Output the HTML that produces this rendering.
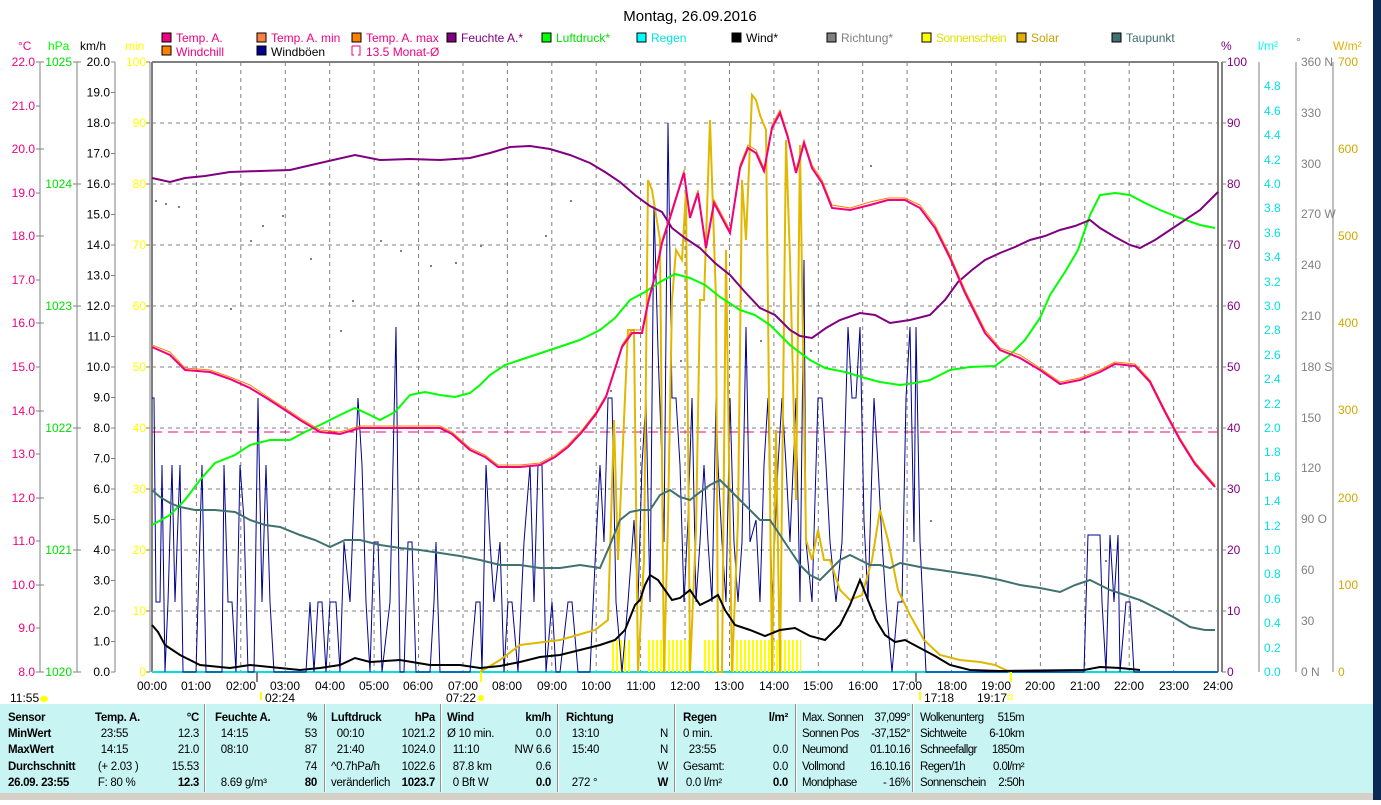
<!DOCTYPE html>
<html><head><meta charset="utf-8"><style>
body{margin:0;width:1381px;height:800px;overflow:hidden;background:#fff;font-family:"Liberation Sans",sans-serif;}
svg text{font-family:"Liberation Sans",sans-serif;font-size:12px;}
.t{position:absolute;top:710px;font-size:11.5px;letter-spacing:-0.3px;line-height:16.2px;white-space:nowrap;font-family:"Liberation Sans",sans-serif;}
.t div{display:flex;justify-content:space-between;height:16.2px}
.b{font-weight:bold}
.sep{position:absolute;top:704px;height:88px;width:1px;background:#909090;border-right:1px solid #fff}
</style></head><body>
<svg width="1381" height="800" xmlns="http://www.w3.org/2000/svg">
<defs>
<pattern id="sun" width="4" height="10" patternUnits="userSpaceOnUse"><rect x="0" width="2" height="10" fill="#ffff00"/></pattern>
</defs>
<rect x="1373" y="0" width="8" height="800" fill="#0a2a55"/>
<text x="690" y="21" text-anchor="middle" style="font-size:15px">Montag, 26.09.2016</text>
<g>
<rect x="162" y="33" width="9" height="9" fill="#f0007f" stroke="#000"/><text x="176" y="42" fill="#f0007f">Temp. A.</text>
<rect x="257" y="33" width="9" height="9" fill="#ff8040" stroke="#000"/><text x="271" y="42" fill="#f0007f">Temp. A. min</text>
<rect x="352" y="33" width="9" height="9" fill="#ff8000" stroke="#000"/><text x="366" y="42" fill="#f0007f">Temp. A. max</text>
<rect x="447" y="33" width="9" height="9" fill="#800080" stroke="#000"/><text x="461" y="42" fill="#800080">Feuchte A.*</text>
<rect x="542" y="33" width="9" height="9" fill="#00ff00" stroke="#000"/><text x="556" y="42" fill="#00e000">Luftdruck*</text>
<rect x="637" y="33" width="9" height="9" fill="#00ffff" stroke="#000"/><text x="651" y="42" fill="#00e0e0">Regen</text>
<rect x="732" y="33" width="9" height="9" fill="#000" stroke="#000"/><text x="746" y="42">Wind*</text>
<rect x="827" y="33" width="9" height="9" fill="#808080" stroke="#000"/><text x="841" y="42" fill="#808080">Richtung*</text>
<rect x="922" y="33" width="9" height="9" fill="#ffff00" stroke="#000"/><text x="936" y="42" fill="#e0e000" style="letter-spacing:-0.5px">Sonnenschein</text>
<rect x="1017" y="33" width="9" height="9" fill="#e0b000" stroke="#000"/><text x="1031" y="42" fill="#c8a000">Solar</text>
<rect x="1112" y="33" width="9" height="9" fill="#407070" stroke="#000"/><text x="1126" y="42" fill="#407070">Taupunkt</text>
<rect x="162" y="46" width="9" height="9" fill="#ff8000" stroke="#000"/><text x="176" y="56" fill="#f0007f">Windchill</text>
<rect x="257" y="46" width="9" height="9" fill="#000090" stroke="#000"/><text x="271" y="56">Windböen</text>
<path d="M352 46h8v9h-2M352 46v9h2" fill="none" stroke="#f0007f"/><text x="366" y="56" fill="#f0007f">13.5 Monat-Ø</text>
</g>
<text x="18" y="50" fill="#f0007f">°C</text><text x="48" y="50" fill="#00ff00">hPa</text><text x="80" y="50">km/h</text><text x="125" y="50" fill="#ffff00">min</text>
<text x="1221" y="50" fill="#800080">%</text><text x="1258" y="50" fill="#00ffff">l/m²</text><text x="1296" y="46" fill="#808080">°</text><text x="1333" y="50" fill="#e0b000">W/m²</text>
<g stroke="#808080" stroke-dasharray="4,4" stroke-width="1">
<path d="M152 123H1218M152 184H1218M152 245H1218M152 306H1218M152 367H1218M152 428H1218M152 489H1218M152 550H1218M152 611H1218"/>
<path d="M196.4 62V672M240.8 62V672M285.3 62V672M329.7 62V672M374.1 62V672M418.5 62V672M463 62V672M507.4 62V672M551.8 62V672M596.2 62V672M640.6 62V672M685 62V672M729.5 62V672M773.9 62V672M818.3 62V672M862.7 62V672M907.1 62V672M951.5 62V672M996 62V672M1040.4 62V672M1084.8 62V672M1129.2 62V672M1173.6 62V672"/>
</g>
<path d="M152 62H1218M152 62V672M1218 62V672M1222 62V672" stroke="#808080" stroke-width="2" fill="none"/>
<line x1="152" y1="672" x2="1218" y2="672" stroke="#00e0e0" stroke-width="2"/>
<g stroke="#808080" fill="none"><path d="M40 62V672M77 62V672M115 62V672M150 62V672"/>
<path d="M36 62h8M36 106h4M36 149h8M36 193h4M36 236h8M36 280h4M36 323h8M36 367h4M36 411h8M36 454h4M36 498h8M36 541h4M36 585h8M36 628h4M36 672h8"/>
<path d="M73 62h8M73 184h8M73 306h8M73 428h8M73 550h8M73 672h8"/>
<path d="M111 62h4M111 92.5h4M111 123h4M111 153.5h4M111 184h4M111 214.5h4M111 245h4M111 275.5h4M111 306h4M111 336.5h4M111 367h4M111 397.5h4M111 428h4M111 458.5h4M111 489h4M111 519.5h4M111 550h4M111 580.5h4M111 611h4M111 641.5h4M111 672h4"/>
<path d="M146 62h4M146 123h4M146 184h4M146 245h4M146 306h4M146 367h4M146 428h4M146 489h4M146 550h4M146 611h4M146 672h4"/>
<path d="M1222 62h4M1222 123h4M1222 184h4M1222 245h4M1222 306h4M1222 367h4M1222 428h4M1222 489h4M1222 550h4M1222 611h4M1222 672h4"/>
<path d="M1259 62V672M1296 62V672M1333 62V672"/>
</g>
<g fill="#f0007f" text-anchor="end"><text x="35" y="66">22.0</text><text x="35" y="110">21.0</text><text x="35" y="153">20.0</text><text x="35" y="197">19.0</text><text x="35" y="240">18.0</text><text x="35" y="284">17.0</text><text x="35" y="327">16.0</text><text x="35" y="371">15.0</text><text x="35" y="415">14.0</text><text x="35" y="458">13.0</text><text x="35" y="502">12.0</text><text x="35" y="545">11.0</text><text x="35" y="589">10.0</text><text x="35" y="632">9.0</text><text x="35" y="676">8.0</text></g>
<g fill="#00e000" text-anchor="end"><text x="72" y="66">1025</text><text x="72" y="188">1024</text><text x="72" y="310">1023</text><text x="72" y="432">1022</text><text x="72" y="554">1021</text><text x="72" y="676">1020</text></g>
<g text-anchor="end"><text x="110" y="66">20.0</text><text x="110" y="96.5">19.0</text><text x="110" y="127">18.0</text><text x="110" y="157.5">17.0</text><text x="110" y="188">16.0</text><text x="110" y="218.5">15.0</text><text x="110" y="249">14.0</text><text x="110" y="279.5">13.0</text><text x="110" y="310">12.0</text><text x="110" y="340.5">11.0</text><text x="110" y="371">10.0</text><text x="110" y="401.5">9.0</text><text x="110" y="432">8.0</text><text x="110" y="462.5">7.0</text><text x="110" y="493">6.0</text><text x="110" y="523.5">5.0</text><text x="110" y="554">4.0</text><text x="110" y="584.5">3.0</text><text x="110" y="615">2.0</text><text x="110" y="645.5">1.0</text><text x="110" y="676">0.0</text></g>
<g fill="#ffff00" text-anchor="end"><text x="146" y="66">100</text><text x="146" y="127">90</text><text x="146" y="188">80</text><text x="146" y="249">70</text><text x="146" y="310">60</text><text x="146" y="371">50</text><text x="146" y="432">40</text><text x="146" y="493">30</text><text x="146" y="554">20</text><text x="146" y="615">10</text><text x="146" y="676">0</text></g>
<g fill="#800080"><text x="1227" y="66">100</text><text x="1227" y="127">90</text><text x="1227" y="188">80</text><text x="1227" y="249">70</text><text x="1227" y="310">60</text><text x="1227" y="371">50</text><text x="1227" y="432">40</text><text x="1227" y="493">30</text><text x="1227" y="554">20</text><text x="1227" y="615">10</text><text x="1227" y="676">0</text></g>
<g fill="#00e0e0"><text x="1264" y="90">4.8</text><text x="1264" y="115">4.6</text><text x="1264" y="139">4.4</text><text x="1264" y="164">4.2</text><text x="1264" y="188">4.0</text><text x="1264" y="212">3.8</text><text x="1264" y="237">3.6</text><text x="1264" y="261">3.4</text><text x="1264" y="286">3.2</text><text x="1264" y="310">3.0</text><text x="1264" y="334">2.8</text><text x="1264" y="359">2.6</text><text x="1264" y="383">2.4</text><text x="1264" y="408">2.2</text><text x="1264" y="432">2.0</text><text x="1264" y="456">1.8</text><text x="1264" y="481">1.6</text><text x="1264" y="505">1.4</text><text x="1264" y="530">1.2</text><text x="1264" y="554">1.0</text><text x="1264" y="578">0.8</text><text x="1264" y="603">0.6</text><text x="1264" y="627">0.4</text><text x="1264" y="652">0.2</text><text x="1264" y="676">0.0</text></g>
<g fill="#808080"><text x="1301" y="66">360 N</text><text x="1301" y="117">330</text><text x="1301" y="168">300</text><text x="1301" y="218">270 W</text><text x="1301" y="269">240</text><text x="1301" y="320">210</text><text x="1301" y="371">180 S</text><text x="1301" y="422">150</text><text x="1301" y="472">120</text><text x="1301" y="523">90 O</text><text x="1301" y="574">60</text><text x="1301" y="625">30</text><text x="1301" y="676">0 N</text></g>
<g fill="#d0a800"><text x="1338" y="66">700</text><text x="1338" y="153">600</text><text x="1338" y="240">500</text><text x="1338" y="327">400</text><text x="1338" y="414">300</text><text x="1338" y="502">200</text><text x="1338" y="589">100</text><text x="1338" y="676">0</text></g>
<rect x="612" y="640" width="18" height="32" fill="url(#sun)"/>
<rect x="648" y="640" width="44" height="32" fill="url(#sun)"/>
<rect x="702" y="640" width="18" height="32" fill="url(#sun)"/>
<rect x="733" y="640" width="68" height="32" fill="url(#sun)"/>
<line x1="152" y1="432" x2="1218" y2="432" stroke="#f0007f" stroke-dasharray="10,6"/>
<g fill="#808080"><rect x="155" y="200" width="2" height="2"/><rect x="165" y="203" width="2" height="2"/><rect x="178" y="206" width="2" height="2"/><rect x="230" y="308" width="2" height="2"/><rect x="250" y="240" width="2" height="2"/><rect x="262" y="225" width="2" height="2"/><rect x="282" y="215" width="2" height="2"/><rect x="310" y="258" width="2" height="2"/><rect x="340" y="330" width="2" height="2"/><rect x="352" y="300" width="2" height="2"/><rect x="380" y="240" width="2" height="2"/><rect x="400" y="250" width="2" height="2"/><rect x="430" y="265" width="2" height="2"/><rect x="455" y="262" width="2" height="2"/><rect x="480" y="245" width="2" height="2"/><rect x="545" y="235" width="2" height="2"/><rect x="570" y="200" width="2" height="2"/><rect x="610" y="390" width="2" height="2"/><rect x="680" y="360" width="2" height="2"/><rect x="740" y="300" width="2" height="2"/><rect x="760" y="340" width="2" height="2"/><rect x="810" y="350" width="2" height="2"/><rect x="870" y="165" width="2" height="2"/><rect x="930" y="520" width="2" height="2"/><rect x="1105" y="560" width="2" height="2"/><rect x="1140" y="600" width="2" height="2"/></g>
<polyline fill="none" stroke="#000090" stroke-width="1" points="152,398 154,398 156,602 160,602 162,465 165,672 168,602 172,465 175,602 180,465 183,672 196,672 198,602 202,465 206,672 222,672 224,465 228,602 232,602 236,672 240,465 244,520 248,672 254,672 258,398 262,602 266,465 270,602 274,672 278,672 300,672 306,672 310,602 314,672 318,602 322,602 326,672 330,602 336,602 340,672 344,542 350,602 358,398 362,465 366,602 370,672 374,542 378,542 382,672 390,602 396,327 400,672 404,672 408,542 412,542 416,672 430,672 434,602 436,542 440,672 470,672 476,602 480,602 482,672 486,465 490,542 494,602 500,542 504,672 508,602 512,602 518,672 524,542 530,465 534,602 538,465 542,465 546,672 552,602 556,672 560,672 568,602 572,602 578,672 590,672 596,542 600,465 604,542 608,398 612,398 616,602 622,672 628,602 634,520 638,602 642,465 646,398 650,602 654,205 658,350 662,465 664,542 668,123 672,398 676,398 680,465 684,602 688,520 692,398 696,602 700,542 704,465 708,542 712,602 716,398 718,465 722,542 726,602 730,398 734,542 738,602 742,542 746,327 750,542 756,520 760,602 764,465 768,398 772,602 778,465 782,398 786,465 790,542 796,398 800,602 804,260 806,542 812,602 818,398 822,398 826,465 830,542 836,602 842,542 848,327 852,398 856,398 860,327 864,520 868,602 874,398 878,465 882,542 886,602 892,672 898,602 902,602 906,398 910,327 914,542 916,327 920,542 926,672 1084,672 1088,535 1100,535 1102,602 1106,672 1110,535 1114,602 1118,535 1120,672 1126,602 1130,602 1134,672 1218,672"/>
<polyline fill="none" stroke="#e0b800" stroke-width="2" points="480,672 500,660 520,645 560,640 595,630 608,620 614,420 618,560 624,420 628,330 634,330 638,672 644,560 648,180 652,190 660,240 664,672 668,520 672,300 676,250 682,260 686,190 690,672 696,530 700,300 704,300 710,120 716,300 718,672 722,672 726,250 732,672 738,520 742,180 746,240 752,95 756,100 760,115 766,130 772,672 776,430 780,672 786,140 790,260 796,500 800,145 806,540 812,560 818,530 824,560 830,560 840,590 850,600 862,595 872,560 880,510 888,540 898,590 910,615 924,640 940,655 960,660 980,662 995,665 1010,672"/>
<polyline fill="none" stroke="#00ff00" stroke-width="2" points="152,525 170,515 185,500 200,480 215,463 235,455 250,445 270,440 290,440 305,432 320,425 340,415 355,408 370,415 380,420 395,412 410,395 425,392 440,395 455,397 470,393 480,385 490,375 505,365 520,360 535,355 550,350 565,345 580,340 600,330 615,318 630,300 645,292 660,282 675,274 690,278 705,285 720,297 740,310 755,315 770,325 790,345 810,360 825,368 845,372 865,378 880,382 900,385 915,383 930,380 950,370 970,367 995,366 1010,355 1025,340 1040,318 1050,295 1065,272 1078,250 1090,215 1100,195 1115,193 1130,195 1145,203 1160,210 1180,218 1200,225 1215,228"/>
<polyline fill="none" stroke="#800080" stroke-width="2" points="152,178 170,182 185,178 205,176 230,172 260,171 290,170 320,163 355,155 380,160 410,159 440,160 470,158 490,153 510,147 530,146 550,149 570,155 590,163 605,172 620,182 635,195 650,206 662,212 672,228 685,238 700,248 715,263 730,275 745,292 760,308 775,315 790,330 800,336 812,338 826,328 840,320 860,313 875,315 890,323 910,320 930,315 945,300 958,282 972,270 985,260 1000,253 1015,247 1030,240 1045,236 1060,230 1075,226 1090,220 1100,228 1115,237 1130,245 1140,248 1155,240 1170,230 1185,220 1200,210 1210,200 1218,192"/>
<polyline fill="none" stroke="#ff8000" stroke-width="1" points="152,345 170,352 185,368 210,370 230,377 250,385 268,397 285,408 300,418 320,430 340,432 360,426 380,426 440,426 452,432 470,448 485,455 498,465 520,465 540,463 555,455 568,445 582,430 596,412 606,395 614,370 622,345 632,330 642,330 648,300 656,270 662,240 670,215 678,190 684,170 690,215 698,190 706,245 714,200 722,215 730,230 740,165 748,145 756,150 764,168 772,125 780,110 788,135 796,170 804,140 812,165 822,180 832,205 850,208 870,202 888,198 905,198 920,205 935,225 950,255 965,290 985,330 1000,348 1020,355 1040,368 1060,382 1080,378 1100,370 1115,362 1135,364 1150,380 1165,410 1180,438 1195,462 1215,485"/>
<polyline fill="none" stroke="#f0007f" stroke-width="2" points="152,347 170,355 185,370 210,372 230,379 250,388 268,399 285,410 300,420 320,432 340,434 360,428 380,428 440,428 452,434 470,450 485,457 498,467 520,467 540,465 555,457 568,447 582,432 596,414 606,397 614,372 622,347 632,333 642,333 648,303 656,272 662,243 670,218 678,192 684,173 690,218 698,193 706,248 714,203 722,218 730,233 740,168 748,148 756,153 764,171 772,128 780,113 788,138 796,173 804,143 812,168 822,183 832,208 850,210 870,205 888,200 905,200 920,208 935,228 950,258 965,293 985,333 1000,350 1020,358 1040,370 1060,384 1080,380 1100,372 1115,364 1135,366 1150,382 1165,412 1180,440 1195,464 1215,487"/>
<polyline fill="none" stroke="#407070" stroke-width="2" points="152,490 160,497 170,503 180,507 195,510 215,510 235,512 250,520 265,525 280,527 300,535 315,540 330,547 345,540 360,540 380,545 400,548 420,550 440,553 460,556 480,560 500,565 520,565 540,568 560,568 580,565 600,568 610,545 620,520 630,512 640,510 650,510 660,495 670,490 680,497 690,500 700,492 710,485 720,480 730,490 740,500 750,510 760,520 770,520 780,535 790,550 800,565 810,575 820,580 830,570 840,560 850,555 860,560 870,565 880,565 890,568 900,563 910,565 925,568 940,570 960,573 980,576 1000,580 1020,585 1040,588 1060,592 1075,585 1090,580 1100,585 1110,590 1125,595 1140,600 1160,610 1175,618 1190,627 1205,630 1215,630"/>
<polyline fill="none" stroke="#000" stroke-width="2" points="152,625 158,632 165,645 180,655 200,665 230,668 250,665 270,667 300,670 320,668 340,665 355,658 370,662 400,660 430,665 460,665 480,668 500,666 520,662 540,657 560,655 580,650 600,645 615,640 625,630 635,605 640,600 645,585 650,575 658,580 665,590 672,600 680,598 690,590 700,605 710,600 718,595 725,610 735,625 750,630 765,636 780,630 795,628 810,636 825,640 840,625 850,605 860,580 868,600 876,620 885,635 895,642 905,640 920,648 935,656 950,665 970,670 1000,671 1084,670 1100,667 1120,668 1140,670"/>
<g text-anchor="middle"><text x="152" y="690">00:00</text><text x="196" y="690">01:00</text><text x="241" y="690">02:00</text><text x="285" y="690">03:00</text><text x="330" y="690">04:00</text><text x="374" y="690">05:00</text><text x="418" y="690">06:00</text><text x="463" y="690">07:00</text><text x="507" y="690">08:00</text><text x="552" y="690">09:00</text><text x="596" y="690">10:00</text><text x="641" y="690">11:00</text><text x="685" y="690">12:00</text><text x="729" y="690">13:00</text><text x="774" y="690">14:00</text><text x="818" y="690">15:00</text><text x="863" y="690">16:00</text><text x="907" y="690">17:00</text><text x="952" y="690">18:00</text><text x="996" y="690">19:00</text><text x="1040" y="690">20:00</text><text x="1085" y="690">21:00</text><text x="1129" y="690">22:00</text><text x="1174" y="690">23:00</text><text x="1218" y="690">24:00</text></g>
<text x="10" y="702">11:55</text><ellipse cx="44" cy="699" rx="4" ry="3" fill="#ffff00"/>
<text x="265" y="702">02:24</text><path d="M261 692v8" stroke="#ffff00" stroke-width="2"/>
<text x="446" y="702">07:22</text><circle cx="481" cy="698" r="3" fill="#ffff00"/>
<text x="924" y="702">17:18</text><path d="M920 692v8" stroke="#ffff00" stroke-width="2"/>
<text x="977" y="702">19:17</text><rect x="1008" y="695" width="4" height="4" fill="none" stroke="#ffff00"/>
<path d="M481 672v10M1011 672v10" stroke="#ffff00" stroke-width="2"/>
<path d="M257 672v10M916 672v10" stroke="#808080" stroke-width="2"/>
<rect x="0" y="704" width="1373" height="89" fill="#c8f4f4"/>
<rect x="0" y="793" width="1373" height="7" fill="#d4d0c8"/>
</svg>
<div class="sep" style="left:204px"></div><div class="sep" style="left:324px"></div><div class="sep" style="left:440px"></div><div class="sep" style="left:557px"></div><div class="sep" style="left:674px"></div><div class="sep" style="left:795px"></div><div class="sep" style="left:912px"></div>
<div class="t b" style="left:8px">Sensor<br>MinWert<br>MaxWert<br>Durchschnitt<br>26.09. 23:55</div>
<div class="t" style="left:95px;width:104px"><div class="b"><span>Temp. A.</span><span>°C</span></div><div><span>&nbsp; 23:55</span><span>12.3</span></div><div><span>&nbsp; 14:15</span><span>21.0</span></div><div><span>&nbsp;(+ 2.03 )</span><span>15.53</span></div><div><span>&nbsp;F: 80 %</span><span class="b">12.3</span></div></div>
<div class="t" style="left:215px;width:102px"><div class="b"><span>Feuchte A.</span><span>%</span></div><div><span>&nbsp; 14:15</span><span>53</span></div><div><span>&nbsp; 08:10</span><span>87</span></div><div><span></span><span>74</span></div><div><span>&nbsp; 8.69 g/m³</span><span class="b">80</span></div></div>
<div class="t" style="left:331px;width:104px"><div class="b"><span>Luftdruck</span><span>hPa</span></div><div><span>&nbsp; 00:10</span><span>1021.2</span></div><div><span>&nbsp; 21:40</span><span>1024.0</span></div><div><span>^0.7hPa/h</span><span>1022.6</span></div><div><span>veränderlich</span><span class="b">1023.7</span></div></div>
<div class="t" style="left:447px;width:104px"><div class="b"><span>Wind</span><span>km/h</span></div><div><span>Ø 10 min.</span><span>0.0</span></div><div><span>&nbsp; 11:10</span><span>NW 6.6</span></div><div><span>&nbsp; 87.8 km</span><span>0.6</span></div><div><span>&nbsp; 0 Bft W</span><span class="b">0.0</span></div></div>
<div class="t" style="left:566px;width:102px"><div class="b"><span>Richtung</span><span></span></div><div><span>&nbsp; 13:10</span><span>N</span></div><div><span>&nbsp; 15:40</span><span>N</span></div><div><span></span><span>W</span></div><div><span>&nbsp; 272 °</span><span class="b">W</span></div></div>
<div class="t" style="left:683px;width:105px"><div class="b"><span>Regen</span><span>l/m²</span></div><div><span>0 min.</span><span></span></div><div><span>&nbsp; 23:55</span><span>0.0</span></div><div><span>Gesamt:</span><span>0.0</span></div><div><span>&nbsp;0.0 l/m²</span><span class="b">0.0</span></div></div>
<div class="t" style="left:802px;width:108px;letter-spacing:-0.6px"><div><span>Max. Sonnen</span><span>37,099°</span></div><div><span>Sonnen Pos</span><span>-37,152°</span></div><div><span>Neumond</span><span>01.10.16</span></div><div><span>Vollmond</span><span>16.10.16</span></div><div><span>Mondphase</span><span>- 16%</span></div></div>
<div class="t" style="left:920px;width:104px;letter-spacing:-0.6px"><div><span>Wolkenunterg</span><span>515m</span></div><div><span>Sichtweite</span><span>6-10km</span></div><div><span>Schneefallgr</span><span>1850m</span></div><div><span>Regen/1h</span><span>0.0l/m²</span></div><div><span>Sonnenschein</span><span>2:50h</span></div></div>
</body></html>
